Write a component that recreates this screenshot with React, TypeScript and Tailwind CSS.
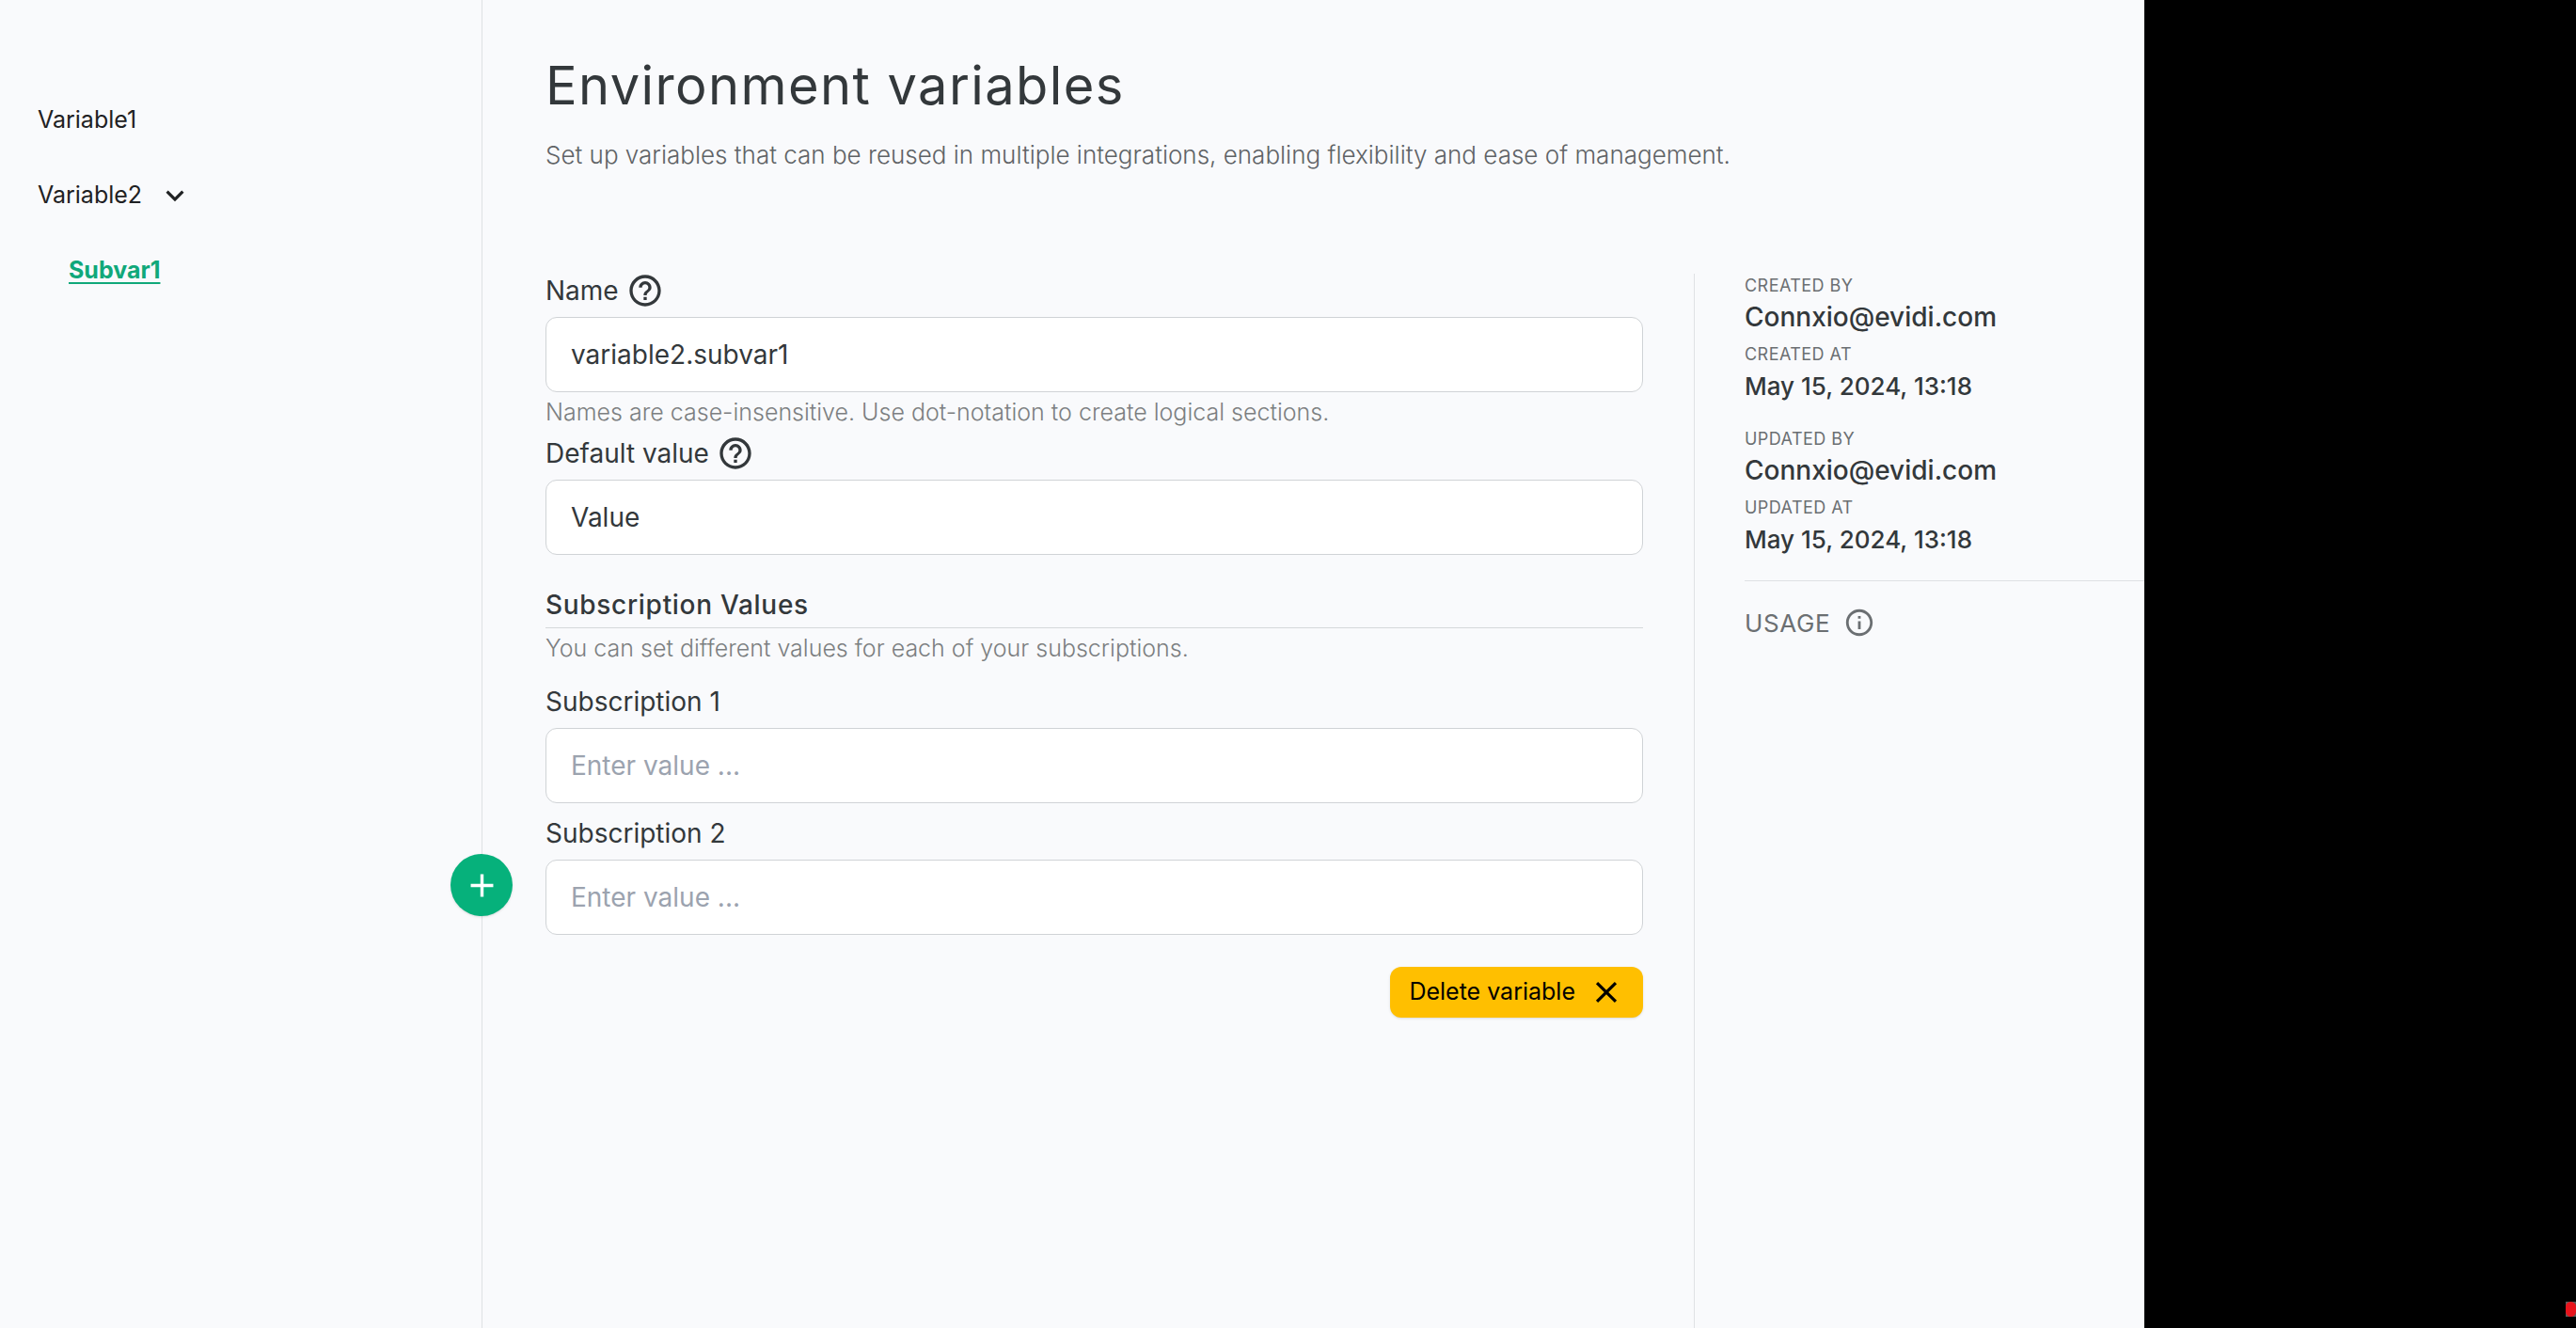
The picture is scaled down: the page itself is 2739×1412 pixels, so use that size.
import React from "react";
import {
  MdAdd,
  MdClose,
  MdHelpOutline,
  MdInfoOutline,
  MdKeyboardArrowDown,
} from "react-icons/md";

type FieldProps = {
  id: string;
  label: string;
  help?: boolean;
  value?: string;
  placeholder?: string;
};

function Field({ id, label, help, value, placeholder }: FieldProps) {
  return (
    <div>
      <div className="mb-2.5 flex h-9 items-center gap-2 text-[28px]">
        <label htmlFor={id}>{label}</label>
        {help && (
          <button type="button" aria-label={`Help for ${label}`}>
            <MdHelpOutline className="size-10" />
          </button>
        )}
      </div>
      <input
        id={id}
        type="text"
        defaultValue={value}
        placeholder={placeholder}
        className="block h-20 w-full rounded-xl border border-[#d0d3d6] bg-white px-[26px] text-[28px] outline-none placeholder:text-[#9ca3af]"
      />
    </div>
  );
}

function Hint({ children }: { children: React.ReactNode }) {
  return (
    <p className="mt-1 flex h-9 items-center text-[25px] font-light text-[#7c7f81]">
      {children}
    </p>
  );
}

function Audit({ action }: { action: string }) {
  return (
    <dl className="flex flex-col gap-[7px] text-[28px] font-medium">
      <div>
        <dt className="flex h-[26px] items-center text-lg font-normal tracking-wide text-[#6b6f72] uppercase">
          {action} by
        </dt>
        <dd className="flex h-10 items-center">Connxio@evidi.com</dd>
      </div>
      <div>
        <dt className="flex h-[26px] items-center text-lg font-normal tracking-wide text-[#6b6f72] uppercase">
          {action} at
        </dt>
        <dd className="flex h-10 items-center text-[26px]">
          May 15, 2024, 13:18
        </dd>
      </div>
    </dl>
  );
}

export default function App() {
  return (
    <div className="flex min-h-screen bg-[#f9fafc] font-['Inter',sans-serif] text-[#33383b]">
      <nav className="relative w-[513px] shrink-0 border-r border-[#dfe1e4] pt-[88px] pl-10 text-[25px] text-[#1f2123]">
        <ul>
          <li className="flex h-20 items-center">
            <a href="#variable1">Variable1</a>
          </li>
          <li>
            <button type="button" className="flex h-20 items-center gap-4">
              Variable2
              <MdKeyboardArrowDown className="size-[38px]" />
            </button>
            <ul>
              <li className="flex h-20 items-center pl-[33px]">
                <a
                  href="#subvar1"
                  className="font-bold text-[#10a87a] underline decoration-2 underline-offset-4"
                >
                  Subvar1
                </a>
              </li>
            </ul>
          </li>
        </ul>
        <button
          type="button"
          aria-label="Add variable"
          className="absolute top-[908px] -right-[33px] flex size-[66px] items-center justify-center rounded-full bg-[#06b17b] text-white shadow-sm"
        >
          <MdAdd className="size-[41px]" />
        </button>
      </nav>

      <main className="flex min-w-0 flex-1 flex-col pl-[67px]">
        <header className="h-[291px] pt-[59px]">
          <h1 className="text-[56px] leading-[64px] tracking-wide">
            Environment variables
          </h1>
          <p className="mt-6 text-[26px] leading-9 font-light text-[#5f6366]">
            Set up variables that can be reused in multiple integrations,
            enabling flexibility and ease of management.
          </p>
        </header>

        <div className="flex flex-1">
          <form className="mr-[54px] min-w-0 flex-1">
            <Field id="name" label="Name" help value="variable2.subvar1" />
            <Hint>
              Names are case-insensitive. Use dot-notation to create logical
              sections.
            </Hint>
            <div className="mt-[7px]">
              <Field id="default" label="Default value" help value="Value" />
            </div>

            <h2 className="mt-7 flex h-[50px] items-center border-b border-[#d5d8db] text-[28px] font-medium tracking-wide">
              Subscription Values
            </h2>
            <Hint>
              You can set different values for each of your subscriptions.
            </Hint>
            <div className="mt-5 flex flex-col gap-3.5">
              <Field id="sub1" label="Subscription 1" placeholder="Enter value ..." />
              <Field id="sub2" label="Subscription 2" placeholder="Enter value ..." />
            </div>

            <div className="mt-[34px] flex justify-end">
              <button
                type="button"
                className="flex h-[54px] items-center gap-3.5 rounded-xl bg-[#ffbf00] px-5 text-[25px] text-black shadow-sm"
              >
                Delete variable
                <MdClose className="size-[38px]" />
              </button>
            </div>
          </form>

          <aside className="w-[479px] shrink-0 border-l border-[#dfe1e4] pl-[53px]">
            <div className="flex flex-col gap-6 border-b border-[#dfe1e4] pb-6">
              <Audit action="Created" />
              <Audit action="Updated" />
            </div>
            <h2 className="mt-6 flex h-10 items-center gap-3.5 text-[26px] tracking-wide text-[#6b6f72]">
              USAGE
              <MdInfoOutline className="size-[34px]" />
            </h2>
          </aside>
        </div>
      </main>

      <div className="flex w-[459px] shrink-0 items-end justify-end bg-black pb-3">
        <div className="flex h-4 w-[11px] bg-[#5c5c5c]">
          <span className="h-full w-full rounded-full bg-[#e8141c]" />
        </div>
      </div>
    </div>
  );
}
